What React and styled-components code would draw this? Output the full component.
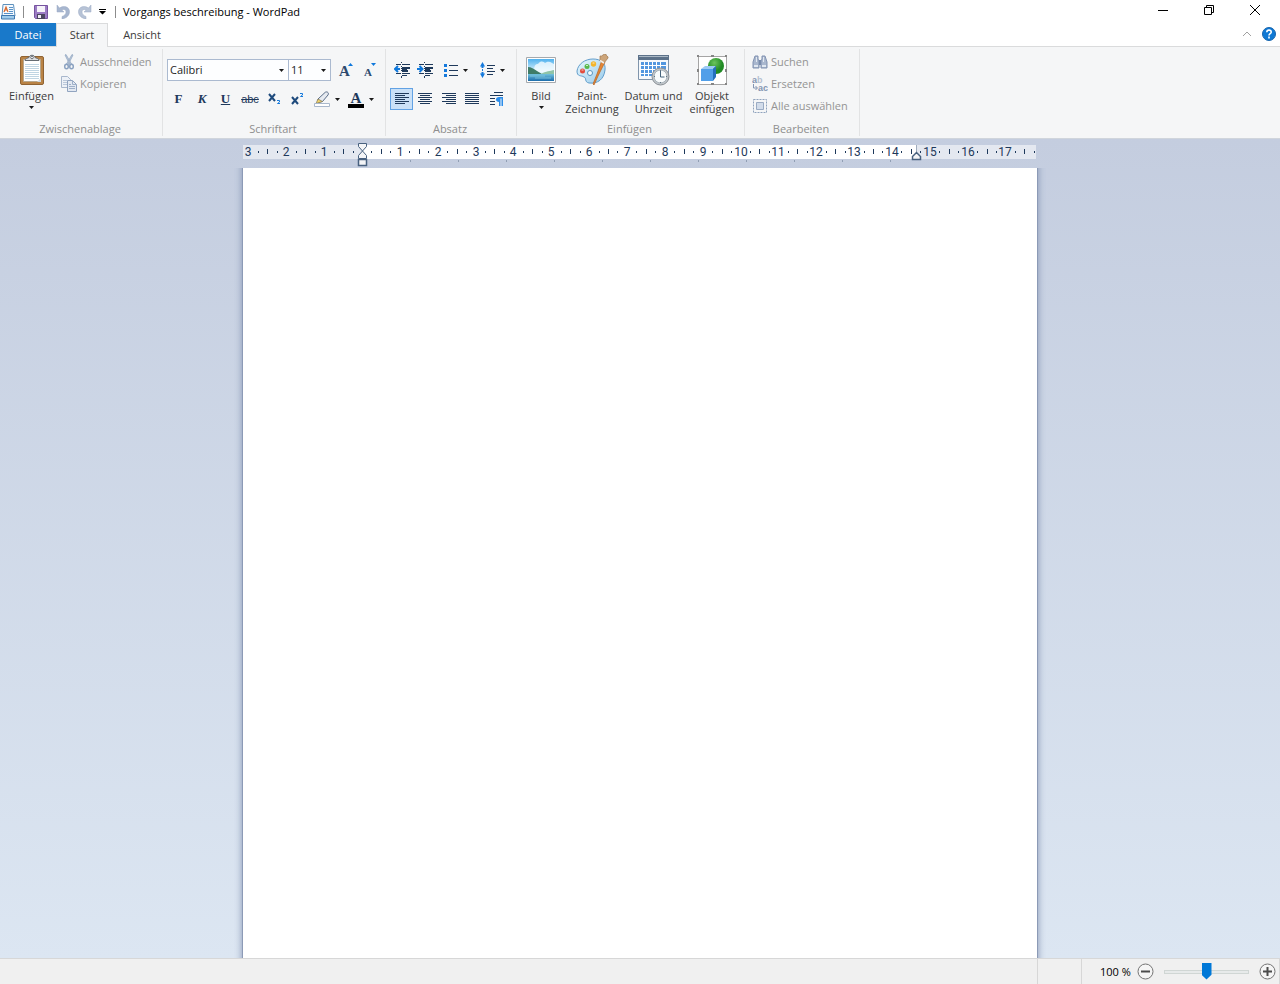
import React from "react"
import styled, { createGlobalStyle } from "styled-components"

const GlobalStyle = createGlobalStyle`
  * {
    box-sizing: border-box;
  }
  body {
    margin: 0;
    font-family: "Open Sans", "Noto Sans", sans-serif;
    font-size: 11px;
    line-height: 14px;
    color: #3c3c3c;
  }
  button, select, input, textarea {
    font: inherit;
    color: inherit;
    margin: 0;
  }
  button {
    display: flex;
    align-items: center;
    justify-content: center;
    flex-shrink: 0;
    padding: 0;
    border: 0;
    background: transparent;
  }
  svg {
    display: block;
    flex-shrink: 0;
  }
`

const Window = styled.div`
  display: flex;
  flex-direction: column;
  height: 100vh;
  background: #ffffff;
`

/* title bar */

const TitleBar = styled.header`
  display: flex;
  align-items: center;
  height: 23px;
  padding-right: 2px;
  color: #000000;

  h1 {
    flex: 1;
    margin: 0;
    font-size: 11px;
    font-weight: normal;
  }
`

const Divider = styled.span`
  width: 1px;
  height: 12px;
  margin: 0 7px;
  background: #8c8c8c;
`

const QuickTools = styled.div`
  display: flex;
  margin-left: -1px;
`

const QuickButton = styled.button`
  width: ${props => props.$width || 22}px;
  height: 22px;
`

const WindowButton = styled.button`
  width: 46px;
  height: 20px;
  align-self: flex-start;
`

/* tabs */

const TabBar = styled.nav`
  display: flex;
  height: 24px;
  margin-bottom: -1px;
  position: relative;
`

const Tab = styled.button`
  width: ${props => props.$width}px;
  height: ${props => (props.$active ? 24 : 23)}px;
  padding-bottom: ${props => (props.$active ? 2 : 0)}px;
  border: 1px solid transparent;
  border-bottom: 0;
  ${props => props.$file && "background: #1979ca; color: #ffffff;"}
  ${props => props.$active && "background: #f5f6f7; border-color: #dadbdc;"}
`

const TabTools = styled.div`
  display: flex;
  align-items: center;
  gap: 10px;
  height: 22px;
  margin-left: auto;
  padding-right: 4px;
`

/* ribbon */

const Ribbon = styled.div`
  display: flex;
  height: 93px;
  padding: 2px 0;
  background: #f5f6f7;
  border-top: 1px solid #dadbdc;
  border-bottom: 1px solid #d0d5dc;
`

const Group = styled.section`
  display: flex;
  flex-direction: column;
  flex-shrink: 0;
  width: ${props => props.$width}px;
  border-right: 1px solid #e2e3e4;

  h2 {
    margin: 0;
    padding-right: 2px;
    font-size: 11px;
    font-weight: normal;
    text-align: center;
    color: #8e8e8e;
  }
`

const GroupBody = styled.div`
  display: flex;
  flex: 1;
  padding: 2px ${props => props.$pad || 0}px;
`

const LargeButton = styled.button`
  flex-direction: column;
  justify-content: flex-start;
  width: ${props => props.$width}px;
  line-height: 13px;

  > svg:first-child {
    margin: 3px 0;
  }
  > svg:last-child {
    margin-top: 4px;
  }
`

const SmallStack = styled.div`
  display: flex;
  flex-direction: column;
`

const SmallButton = styled.button`
  justify-content: flex-start;
  gap: 3px;
  height: 22px;
  color: #949494;
`

const ToolStack = styled.div`
  display: flex;
  flex-direction: column;
  gap: 7px;
  padding-top: 8px;
`

const ToolRow = styled.div`
  display: flex;
  align-items: center;
  height: 22px;
`

const ToolButton = styled.button`
  width: ${props => props.$width || 24}px;
  height: 22px;
  gap: 5px;
  border: 1px solid ${props => (props.$active ? "#62a2e4" : "transparent")};
  background: ${props => (props.$active ? "#c9e0f7" : "transparent")};
`

const Letter = styled.span`
  font-family: "Liberation Serif", serif;
  font-size: 13px;
  font-weight: bold;
  font-style: ${props => (props.$italic ? "italic" : "normal")};
  text-decoration: ${props => props.$line || "none"};
  color: #1e395b;
`

const Struck = styled(Letter)`
  font-weight: normal;
  font-family: "Liberation Sans", sans-serif;
  font-size: 11px;
`

const Combo = styled.div`
  position: relative;
  width: ${props => props.$width}px;
  margin-right: -1px;

  select {
    width: 100%;
    height: 22px;
    padding: 0 2px;
    appearance: none;
    border: 1px solid #abbad0;
    border-radius: 0;
    background: #fdfeff;
    color: #1e1e1e;
  }
  svg {
    position: absolute;
    top: 10px;
    right: 5px;
    pointer-events: none;
  }
`

/* document area */

const Workspace = styled.main`
  display: flex;
  flex-direction: column;
  align-items: center;
  flex: 1;
  min-height: 0;
  overflow: hidden;
  background: linear-gradient(#c4cddf, #dce6f2);
`

const RulerStrip = styled.div`
  width: 794px;
  height: 29px;
  flex-shrink: 0;

  text {
    font-family: Roboto, sans-serif;
    font-size: 12px;
    text-anchor: middle;
    fill: #1e395b;
  }
`

const SheetArea = styled.div`
  display: flex;
  flex: 1;
  justify-content: center;
  width: 100%;
  overflow: hidden;
`

const Sheet = styled.textarea`
  width: 796px;
  margin: -10px 0 !important;
  padding: 86px 120px;
  border: 1px solid #8c9ab6;
  border-width: 0 1px;
  border-radius: 0;
  outline: 0;
  resize: none;
  background: #ffffff;
  box-shadow: 0 0 7px #8594b4;
`

/* status bar */

const StatusBar = styled.footer`
  display: flex;
  justify-content: flex-end;
  height: 26px;
  background: #f0f0f0;
  border-top: 1px solid #d7d7d7;
  color: #000000;
`

const StatusCell = styled.div`
  width: 44px;
  border-left: 1px solid #d7d7d7;
`

const ZoomCell = styled.div`
  display: flex;
  align-items: center;
  width: 199px;
  padding-left: 18px;
  border: 1px solid #d7d7d7;
  border-width: 0 1px;

  label {
    width: 37px;
  }
`

const ZoomSlider = styled.input`
  appearance: none;
  width: 85px;
  height: 18px;
  margin: 0 10px !important;
  background: transparent;

  &::-webkit-slider-runnable-track {
    height: 4px;
    border: 1px solid #d0d6d4;
    background: #e7eaea;
  }
  &::-webkit-slider-thumb {
    appearance: none;
    width: 10px;
    height: 17px;
    margin-top: -8px;
    background: #0078d7;
    clip-path: polygon(0 0, 100% 0, 100% 72%, 50% 100%, 0 72%);
  }
`

const Caret = () => (
  <svg width="5" height="3" viewBox="0 0 5 3">
    <path d="M0 0h5L2.500 3z" fill="#1a1a1a" />
  </svg>
)

const AppIcon = () => (
  <svg width="16" height="18" viewBox="0 0 16 18">
    <path d="M3 1.500h10.500L15 13H2z" fill="#f5faff" stroke="#5c90bd" />
    <path d="M1.500 12.500h13V16h-13z" fill="#9fcbea" stroke="#3e78b0" />
    <path d="M4 9l2-5 2 5M5 7h2" fill="none" stroke="#d9682b" strokeWidth="1.200" />
    <path d="M9 4.500h4M9 6.500h4M9 8.500h4M4 10.500h9" stroke="#5a93c8" />
  </svg>
)

const SaveIcon = () => (
  <svg width="14" height="14" viewBox="0 0 14 14">
    <path d="M.5.5h13v13h-12l-1-1z" fill="#9c7cc4" stroke="#76539f" />
    <path d="M3 1h8v6H3z" fill="#f6f3fa" />
    <path d="M3 9h8v5H3z" fill="#4c4660" />
    <path d="M4 10h3v3H4z" fill="#f0edf4" />
  </svg>
)

const UndoIcon = ({ flip }) => (
  <svg width="14" height="14" viewBox="0 0 14 14">
    <g transform={flip ? "translate(14 0) scale(-1 1)" : undefined}>
      <path d="M1 0v7h7L5.800 5C8.500 3.700 10 5 10 7c0 2-1.500 3.600-4 4.500V14c4.500-.8 7.500-3.500 7.500-7.300C13.500 2 8 0 3.500 3z" fill={flip ? "#b7c3d6" : "#a7b6cf"} stroke="#9cabc5" strokeWidth=".5" />
    </g>
  </svg>
)

const CustomizeIcon = () => (
  <svg width="7" height="6" viewBox="0 0 7 6">
    <path d="M0 0h7v1H0zM0 2h7L3.500 5.500z" fill="#000" />
  </svg>
)

const PasteIcon = () => (
  <svg width="26" height="32" viewBox="0 0 26 32">
    <rect x="1.500" y="2.500" width="23" height="28" rx="1.500" fill="#b98345" stroke="#8f6333" />
    <path d="M4.500 5.500h17v22h-17z" fill="#fff" stroke="#b7a78f" />
    <path d="M6 10.500h14M6 12.500h14M6 14.500h14M6 16.500h14M6 18.500h14M6 20.500h14M6 22.500h14M6 24.500h14" stroke="#c0d5e3" />
    <path d="M18 28l4-4v4z" fill="#cfd8e0" />
    <path d="M6 6.500c0-2 3-2.500 4-3C10.500.5 15.500.5 16 3.500c1 .5 4 1 4 3z" fill="#dedfe1" stroke="#666c73" />
    <circle cx="13" cy="3.500" r="1.300" fill="#fff" stroke="#696e75" />
  </svg>
)

const CutIcon = () => (
  <svg width="16" height="16" viewBox="0 0 16 16">
    <path d="M4 1l1-.5L10.500 10l-1.500 1zM12 1l-1-.5L5.500 10 7 11z" fill="#bdcadb" stroke="#94a8c3" strokeWidth=".8" />
    <ellipse cx="5.500" cy="12.500" rx="1.800" ry="2.300" fill="none" stroke="#8ba2c1" strokeWidth="1.500" />
    <ellipse cx="10.500" cy="12.500" rx="1.800" ry="2.300" fill="none" stroke="#8ba2c1" strokeWidth="1.500" />
  </svg>
)

const CopyIcon = () => (
  <svg width="16" height="16" viewBox="0 0 16 16">
    <path d="M.5.500h6l3 3v8h-9z" fill="#edf1f7" stroke="#a8b7cc" />
    <path d="M2 4.500h4M2 6.500h4M2 8.500h4" stroke="#bac7d9" />
    <path d="M6.500 4.500h5l4 4v7h-9z" fill="#e3e9f2" stroke="#91a4c0" />
    <path d="M11.500 4.500v4h4M8 8.500h2M8 10.500h6M8 12.500h6" fill="none" stroke="#9eb0c9" />
  </svg>
)

const GrowIcon = ({ small }) => (
  <svg width="16" height="20" viewBox="0 -2 16 20">
    <text x={small ? 2 : 1} y="14" fontFamily="Liberation Serif, serif" fontSize={small ? 11 : 15} fontWeight="bold" fill="#2c4a6e">A</text>
    <path d={small ? "M9 1h5l-2.500 3z" : "M10 4h5l-2.500-3z"} fill="#0f78dc" />
  </svg>
)

const ScriptIcon = ({ up }) => (
  <svg width="14" height="14" viewBox="0 0 14 14">
    <path d={up ? "M1 5l6 7M7 5l-6 7" : "M1 2l6 7M7 2l-6 7"} stroke="#1e4a7c" strokeWidth="2" />
    <path d={up ? "M9 1.500h2.500v1.500L9.500 4.500H12" : "M9 8.500h2.500v1.500l-2 1.500H12"} fill="none" stroke="#1479dc" />
  </svg>
)

const HighlightIcon = () => (
  <svg width="16" height="16" viewBox="0 0 16 16">
    <path d="M4 8l7-6.500c1.500-1.500 4.500 0 3 2.500L8.500 10.500 4 11.500z" fill="#e6eaf0" stroke="#5a6d88" />
    <path d="M4 8l4.500 2.500L2 12.500z" fill="#f0d36b" stroke="#817957" strokeWidth=".7" />
    <path d="M.5 12.500h15v3H.5z" fill="#fff" stroke="#a9b8cc" />
  </svg>
)

const FontColorIcon = () => (
  <svg width="16" height="20" viewBox="0 -3 16 20">
    <text x="8" y="11" textAnchor="middle" fontFamily="Liberation Serif, serif" fontSize="15" fontWeight="bold" fill="#1e395b">A</text>
    <path d="M0 12h16v4H0z" fill="#000" />
  </svg>
)

const IndentIcon = ({ inward }) => (
  <svg width="16" height="16" viewBox="0 0 16 16" shapeRendering="crispEdges">
    <path d="M7.500 0v1M7.500 14v2M2 2.500h5M8 2.500h8M8 5h8M8 7.500h5M2 11.500h5M8 11.500h8M8 13.500h5M7.500 4v1M7.500 6v1M7.500 8v1" stroke="#1e395b" />
    <path d="M8 4.500h8v2H8zM8 8h6v2H8z" fill="#1e395b" />
    <path d={inward ? "M0 7h4M2.500 4l3 3-3 3" : "M6 7H1M4 4L1 7l3 3"} fill="none" stroke="#0f78dc" strokeWidth="2" shapeRendering="auto" />
  </svg>
)

const BulletsIcon = () => (
  <svg width="14" height="14" viewBox="0 0 14 14">
    <path d="M5 2.500h9M5 7.500h9M5 12.500h9" stroke="#1e395b" />
    <path d="M0 1h3v3H0zM0 6h3v3H0zM0 11h3v3H0z" fill="#1479dc" />
  </svg>
)

const SpacingIcon = () => (
  <svg width="15" height="16" viewBox="0 0 15 16">
    <path d="M7 3.500h8M7 6.500h6M7 9.500h8M7 12.500h6" stroke="#1e395b" />
    <path d="M0 4.500L2.500 0 5 4.500H3.500V6h-2V4.500zM0 11.500L2.500 16 5 11.500H3.500V10h-2v1.500zM2 7h1v2H2z" fill="#1479dc" />
  </svg>
)

const alignLines = {
  left: [[0, 14], [0, 10], [0, 14], [0, 10], [0, 14], [0, 10]],
  center: [[0, 14], [2, 12], [0, 14], [2, 12], [0, 14], [2, 12]],
  right: [[0, 14], [4, 14], [0, 14], [4, 14], [0, 14], [4, 14]],
  justify: [[0, 14], [0, 14], [0, 14], [0, 14], [0, 14], [0, 14]],
}

const AlignIcon = ({ kind }) => (
  <svg width="14" height="12" viewBox="0 0 14 12">
    {alignLines[kind].map(([from, to], i) => (
      <path key={i} d={`M${from} ${i * 2 + 0.5}H${to}`} stroke="#1e395b" />
    ))}
  </svg>
)

const ParagraphIcon = () => (
  <svg width="14" height="14" viewBox="0 0 14 14">
    <path d="M4 .5h9M0 3.500h13M0 6.500h5M0 9.500h5M0 12.500h5" stroke="#1e395b" />
    <path d="M13 5v9h-1.500V6.500h-1V14H9V10C5 10 5 5 9 5z" fill="#2a8cea" />
  </svg>
)

const PictureIcon = () => (
  <svg width="32" height="32" viewBox="0 0 32 32">
    <defs>
      <linearGradient id="sky" x2="0" y2="1">
        <stop offset="0" stopColor="#4fb1ee" />
        <stop offset=".6" stopColor="#e4f7fd" />
      </linearGradient>
      <linearGradient id="sea" x2="0" y2="1">
        <stop offset="0" stopColor="#72c2dd" />
        <stop offset="1" stopColor="#1b6cab" />
      </linearGradient>
    </defs>
    <path d="M1.500 3.500h29v25h-29z" fill="#fff" stroke="#a5a9ad" />
    <path d="M3 5h26v22H3z" fill="url(#sky)" />
    <path d="M13 10c3-4 6-2 7-1 4-3 7 0 9 1v8H9c0-6 1-8 4-8z" fill="#f4fbff" opacity=".8" />
    <path d="M3 13c3 0 6 2 9 4l5 3H3z" fill="#3f7c68" />
    <path d="M16 20c5-3 9-3 13-4v4z" fill="#8fc4a8" />
    <path d="M3 20h26v7H3z" fill="url(#sea)" />
    <path d="M5 22h15M10 24h16" stroke="#8bd0e8" opacity=".7" />
  </svg>
)

const PaintIcon = () => (
  <svg width="34" height="32" viewBox="0 0 34 32">
    <defs>
      <linearGradient id="palette" x2="1" y2="1">
        <stop offset="0" stopColor="#eaf8ff" />
        <stop offset="1" stopColor="#98cbea" />
      </linearGradient>
    </defs>
    <path d="M18 5c8 0 13 4 12 11-1 9-7 14-16 13-5-1-2-5-5-6-3-2-7 0-7-6C3 10 10 5 18 5z" fill="url(#palette)" stroke="#619dcb" />
    <circle cx="15" cy="19" r="2.500" fill="#f6fbfd" stroke="#5995bf" />
    <circle cx="7.500" cy="17" r="2.500" fill="#e34c3d" />
    <circle cx="12" cy="12.500" r="2.500" fill="#58b94d" />
    <circle cx="18.500" cy="10" r="2.700" fill="#f4b52b" />
    <path d="M6.500 16h2M11 11.500h2M17.500 9h2" stroke="#fff" opacity=".7" />
    <path d="M27 6l3 2-7 14-4 9-1-1 4-10z" fill="#e58634" stroke="#b56322" strokeWidth=".7" />
    <path d="M25 2c2 1 4-3 6-2-1 2 3 2 2 4l-4 5-4-2z" fill="#cda57a" stroke="#9c764f" strokeWidth=".7" />
    <path d="M25 6.500l4 2.500" stroke="#f1eee9" strokeWidth="1.500" />
  </svg>
)

const DateIcon = () => (
  <svg width="33" height="32" viewBox="0 0 33 32">
    <path d="M1.500 1.500h30v24h-30z" fill="#f6f9fc" stroke="#8095ac" />
    <path d="M1 1h31v5H1z" fill="#5c7189" />
    <path d="M2 2h29v1H2z" fill="#aab8c5" />
    <path d="M4 8h25v14H4z" fill="#5397df" />
    <path d="M3 11.500h26M3 15.500h26M3 19.500h26M7.500 8v15M11.500 8v15M15.500 8v15M19.500 8v15M23.500 8v15" stroke="#fff" />
    <circle cx="23.500" cy="22.500" r="8.500" fill="#c3c8cc" stroke="#898f95" />
    <circle cx="23.500" cy="22.500" r="6.500" fill="#f8fbfc" stroke="#a9b3ba" />
    <path d="M23.500 17v6h4" fill="none" stroke="#46647d" />
    <path d="M23.500 16v1M23.500 28v1M17 22.500h1M29 22.500h1" stroke="#617483" />
  </svg>
)

const ObjectIcon = () => (
  <svg width="32" height="32" viewBox="0 0 32 32">
    <defs>
      <radialGradient id="ball" cx=".4" cy=".3">
        <stop offset="0" stopColor="#6cc45c" />
        <stop offset="1" stopColor="#218b25" />
      </radialGradient>
    </defs>
    <path d="M2.500 2.500h28v28h-28z" fill="#fff" stroke="#a5a5a5" />
    <circle cx="20" cy="12" r="8" fill="url(#ball)" />
    <path d="M5 15l4-3h11l-3 3z" fill="#9ccaf5" />
    <path d="M17 15l3-3v11l-3 4z" fill="#256fbd" />
    <path d="M5 15h12v12H5z" fill="#519fe9" />
    <path d="M1 1h2v2H1zM29 1h2v2h-2zM1 29h2v2H1zM29 29h2v2h-2zM15 1h3v2h-3zM15 29h3v2h-3zM1 15h2v3H1zM29 15h2v3h-2z" fill="#858585" />
  </svg>
)

const FindIcon = () => (
  <svg width="16" height="16" viewBox="0 0 16 16">
    <path d="M3 2h3v3l1 2v7H1V8zM13 2h-3v3L9 7v7h6V8z" fill="#a9b7ce" stroke="#8192b1" />
    <path d="M7 6h2v5H7z" fill="#788bab" />
    <path d="M2 11h4v2H2zM10 11h4v2h-4zM4 3h1v5H4zM11 3h1v5h-1z" fill="#e1e8f1" />
  </svg>
)

const ReplaceIcon = () => (
  <svg width="16" height="20" viewBox="0 0 16 20">
    <g fontFamily="Liberation Sans, sans-serif" fontSize="9" fontWeight="bold">
      <text x="0" y="9" fill="#8395b2">a<tspan fill="#b6c1d1">b</tspan></text>
      <text x="6" y="17" fill="#8395b2">ac</text>
    </g>
    <path d="M1.500 10v4H5M3.500 12l2 2-2 2" fill="none" stroke="#8395b2" />
  </svg>
)

const SelectAllIcon = () => (
  <svg width="16" height="16" viewBox="0 0 16 16">
    <path d="M1.500 1.500h13v13h-13z" fill="none" stroke="#8fa3bd" strokeDasharray="2 1" />
    <path d="M4.500 4.500h7v7h-7z" fill="#d2dcea" stroke="#9aabc3" />
  </svg>
)

const HelpIcon = () => (
  <svg width="14" height="14" viewBox="0 0 14 14">
    <circle cx="7" cy="7" r="6.500" fill="#0f78d4" stroke="#1765ad" />
    <path d="M4.800 5.200c.2-3 4.600-2.600 4.400 0-.1 1.500-2.200 1.500-2.200 3.300M7 9.500v2" fill="none" stroke="#fff" strokeWidth="1.600" />
  </svg>
)

const ZoomIcon = ({ plus }) => (
  <svg width="17" height="17" viewBox="0 0 17 17">
    <circle cx="8.500" cy="8.500" r="7.500" fill="#f5f5f5" stroke="#747474" />
    <path d={plus ? "M4 8.500h9M8.500 4v9" : "M4 8.500h9"} stroke="#4c4c4c" strokeWidth="2" />
  </svg>
)

const CM = 37.85
const ORIGIN = 119

const Ruler = () => {
  const marks = []
  for (let q = -12; q <= 71; q++) {
    const x = Math.round(ORIGIN + (q * CM) / 4)
    if (q === 0) continue
    if (q % 4 === 0) {
      marks.push(<text key={q} x={x} y="17">{Math.abs(q / 4)}</text>)
    } else if (q % 2 === 0) {
      marks.push(<path key={q} d={`M${x} 10h1v5h-1z`} fill="#1e395b" />)
    } else {
      marks.push(<path key={q} d={`M${x} 12h1v2h-1z`} fill="#1e395b" />)
    }
  }
  const stops = Array.from({ length: 11 }, (_, i) => ORIGIN + (i + 1) * 48)
  return (
    <RulerStrip>
      <svg width="794" height="29" viewBox="0 0 794 29" role="img" aria-label="Lineal">
        <path d="M0 6h793v14H0z" fill="#e4e8f0" />
        <path d="M119 6h554v14H119z" fill="#fff" />
        {marks}
        {stops.map(x => <path key={x} d={`M${x} 21h1v2h-1z`} fill="#919fb4" />)}
        <path d="M115.500 4.500h8v3l-4 4.500-4-4.500zM115.500 19.500v-3l4-4.500 4 4.500v3z" fill="#f4f5f7" stroke="#48617f" />
        <path d="M115.500 20.500h8v6h-8z" fill="#f4f5f7" stroke="#48617f" strokeWidth="1.500" />
        <path d="M673.500 6v7" stroke="#a0acbd" />
        <path d="M669.500 20.500v-3l4-4 4 4v3z" fill="#f4f5f7" stroke="#48617f" strokeWidth="1.500" />
      </svg>
    </RulerStrip>
  )
}

const App = () => {
  return (
    <Window>
      <GlobalStyle />
      <TitleBar>
        <AppIcon />
        <Divider />
        <QuickTools>
          <QuickButton aria-label="Speichern"><SaveIcon /></QuickButton>
          <QuickButton aria-label="Rückgängig"><UndoIcon /></QuickButton>
          <QuickButton aria-label="Wiederholen"><UndoIcon flip /></QuickButton>
          <QuickButton $width={12} aria-label="Symbolleiste anpassen"><CustomizeIcon /></QuickButton>
        </QuickTools>
        <Divider />
        <h1>Vorgangs beschreibung - WordPad</h1>
        <WindowButton aria-label="Minimieren">
          <svg width="10" height="10"><path d="M0 5.500h10" stroke="#000" /></svg>
        </WindowButton>
        <WindowButton aria-label="Verkleinern">
          <svg width="10" height="10"><path d="M.5 2.500h7v7h-7zM2.500 2.500v-2h7v7h-2" fill="none" stroke="#000" /></svg>
        </WindowButton>
        <WindowButton aria-label="Schließen">
          <svg width="10" height="10"><path d="M0 0l10 10M10 0L0 10" stroke="#000" /></svg>
        </WindowButton>
      </TitleBar>

      <TabBar>
        <Tab $width={56} $file>Datei</Tab>
        <Tab $width={52} $active>Start</Tab>
        <Tab $width={68}>Ansicht</Tab>
        <TabTools>
          <button aria-label="Menüband minimieren">
            <svg width="10" height="6"><path d="M1 5l4-4 4 4" fill="none" stroke="#a0a0a0" /></svg>
          </button>
          <button aria-label="Hilfe"><HelpIcon /></button>
        </TabTools>
      </TabBar>

      <Ribbon>
        <Group $width={163}>
          <GroupBody $pad={2}>
            <LargeButton $width={59}>
              <PasteIcon />
              <span>Einfügen</span>
              <Caret />
            </LargeButton>
            <SmallStack>
              <SmallButton><CutIcon />Ausschneiden</SmallButton>
              <SmallButton><CopyIcon />Kopieren</SmallButton>
            </SmallStack>
          </GroupBody>
          <h2>Zwischenablage</h2>
        </Group>

        <Group $width={223}>
          <GroupBody $pad={4}>
            <ToolStack>
              <ToolRow>
                <Combo $width={122}>
                  <select aria-label="Schriftfamilie"><option>Calibri</option></select>
                  <Caret />
                </Combo>
                <Combo $width={43}>
                  <select aria-label="Schriftgrad"><option>11</option></select>
                  <Caret />
                </Combo>
                <ToolButton $width={32} aria-label="Schrift vergrößern"><GrowIcon /></ToolButton>
                <ToolButton $width={16} aria-label="Schrift verkleinern"><GrowIcon small /></ToolButton>
              </ToolRow>
              <ToolRow>
                <ToolButton $width={23} aria-label="Fett"><Letter>F</Letter></ToolButton>
                <ToolButton aria-label="Kursiv"><Letter $italic>K</Letter></ToolButton>
                <ToolButton $width={23} aria-label="Unterstrichen"><Letter $line="underline">U</Letter></ToolButton>
                <ToolButton $width={26} aria-label="Durchgestrichen"><Struck $line="line-through">abc</Struck></ToolButton>
                <ToolButton $width={23} aria-label="Tiefgestellt"><ScriptIcon /></ToolButton>
                <ToolButton aria-label="Hochgestellt"><ScriptIcon up /></ToolButton>
                <ToolButton $width={34} aria-label="Texthervorhebungsfarbe"><HighlightIcon /><Caret /></ToolButton>
                <ToolButton $width={33} aria-label="Textfarbe"><FontColorIcon /><Caret /></ToolButton>
              </ToolRow>
            </ToolStack>
          </GroupBody>
          <h2>Schriftart</h2>
        </Group>

        <Group $width={131}>
          <GroupBody $pad={4}>
            <ToolStack>
              <ToolRow>
                <ToolButton aria-label="Einzug verkleinern"><IndentIcon /></ToolButton>
                <ToolButton $width={22} aria-label="Einzug vergrößern"><IndentIcon inward /></ToolButton>
                <ToolButton $width={40} aria-label="Liste starten"><BulletsIcon /><Caret /></ToolButton>
                <ToolButton $width={32} aria-label="Zeilenabstand"><SpacingIcon /><Caret /></ToolButton>
              </ToolRow>
              <ToolRow>
                <ToolButton $width={23} $active aria-label="Linksbündig"><AlignIcon kind="left" /></ToolButton>
                <ToolButton aria-label="Zentriert"><AlignIcon kind="center" /></ToolButton>
                <ToolButton $width={23} aria-label="Rechtsbündig"><AlignIcon kind="right" /></ToolButton>
                <ToolButton $width={24} aria-label="Blocksatz"><AlignIcon kind="justify" /></ToolButton>
                <ToolButton $width={26} aria-label="Absatz"><ParagraphIcon /></ToolButton>
              </ToolRow>
            </ToolStack>
          </GroupBody>
          <h2>Absatz</h2>
        </Group>

        <Group $width={228}>
          <GroupBody $pad={2}>
            <LargeButton $width={44}>
              <PictureIcon />
              <span>Bild</span>
              <Caret />
            </LargeButton>
            <LargeButton $width={58}>
              <PaintIcon />
              <span>Paint-<br />Zeichnung</span>
            </LargeButton>
            <LargeButton $width={65}>
              <DateIcon />
              <span>Datum und<br />Uhrzeit</span>
            </LargeButton>
            <LargeButton $width={52}>
              <ObjectIcon />
              <span>Objekt<br />einfügen</span>
            </LargeButton>
          </GroupBody>
          <h2>Einfügen</h2>
        </Group>

        <Group $width={115}>
          <GroupBody $pad={7}>
            <SmallStack>
              <SmallButton><FindIcon />Suchen</SmallButton>
              <SmallButton><ReplaceIcon />Ersetzen</SmallButton>
              <SmallButton><SelectAllIcon />Alle auswählen</SmallButton>
            </SmallStack>
          </GroupBody>
          <h2>Bearbeiten</h2>
        </Group>
      </Ribbon>

      <Workspace>
        <Ruler />
        <SheetArea>
          <Sheet aria-label="Dokument" />
        </SheetArea>
      </Workspace>

      <StatusBar>
        <StatusCell />
        <ZoomCell>
          <label htmlFor="zoom">100 %</label>
          <button aria-label="Verkleinern"><ZoomIcon /></button>
          <ZoomSlider id="zoom" type="range" min="0" max="100" defaultValue="50" />
          <button aria-label="Vergrößern"><ZoomIcon plus /></button>
        </ZoomCell>
      </StatusBar>
    </Window>
  )
}

export default App
